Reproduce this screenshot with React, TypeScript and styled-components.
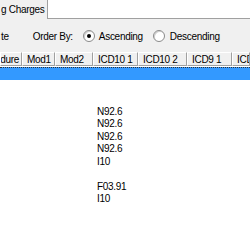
import styled, { createGlobalStyle } from 'styled-components';

const GlobalStyle = createGlobalStyle`
  html, body {
    margin: 0;
    padding: 0;
    background: #ffffff;
    overflow: hidden;
  }
  body {
    font-family: "Liberation Sans", Arial, sans-serif;
    font-size: 10px;
    letter-spacing: -0.3px;
    color: #000000;
  }
`;

const Screen = styled.div`
  width: 250px;
  height: 250px;
  display: flex;
  flex-direction: column;
  overflow: hidden;
`;

const TabStrip = styled.div`
  display: flex;
  height: 18px;
  border-bottom: 1px solid #a0a0a0;
  background: #ffffff;
  flex-shrink: 0;
`;

const Tab = styled.div`
  width: 48px;
  height: 19px;
  display: flex;
  align-items: center;
  padding-left: 1px;
  box-sizing: border-box;
  background: #f0f0f0;
  border-right: 1px solid #a0a0a0;
  white-space: nowrap;
  position: relative;
  z-index: 1;
`;

const Panel = styled.div`
  background: #f0f0f0;
  display: flex;
  flex-direction: column;
  flex-shrink: 0;
`;

const Options = styled.div`
  height: 33px;
  display: flex;
  align-items: center;
  padding-top: 1px;
  box-sizing: border-box;
`;

const Label = styled.span<{ ml: number }>`
  margin-left: ${(p) => p.ml}px;
  white-space: nowrap;
`;

const Radio = styled.span<{ checked?: boolean; ml: number }>`
  margin-left: ${(p) => p.ml}px;
  width: 12px;
  height: 12px;
  border-radius: 50%;
  box-sizing: border-box;
  background: #ffffff;
  border: 1px solid #8a8a8a;
  box-shadow: inset 1px 1px 0 #d0d0d0;
  display: inline-flex;
  align-items: center;
  justify-content: center;
  flex-shrink: 0;
  &::after {
    content: '';
    width: 4px;
    height: 4px;
    border-radius: 50%;
    background: ${(p) => (p.checked ? '#000000' : 'transparent')};
  }
`;

const Grid = styled.div`
  display: flex;
  flex-direction: column;
  background: #ffffff;
  flex: 1;
`;

const HeaderRow = styled.div`
  display: flex;
  height: 14px;
  background: #f0f0f0;
  margin-bottom: 1px;
`;

const HeaderCell = styled.div<{ w: number; right?: boolean }>`
  width: ${(p) => p.w}px;
  flex-shrink: 0;
  box-sizing: border-box;
  display: flex;
  align-items: center;
  justify-content: ${(p) => (p.right ? 'flex-end' : 'flex-start')};
  padding: ${(p) => (p.right ? '0 2px 0 0' : '0 0 0 4px')};
  border-top: 1px solid #ffffff;
  border-left: 1px solid #ffffff;
  border-right: 1px solid #a0a0a0;
  border-bottom: 1px solid #a0a0a0;
  overflow: hidden;
  white-space: nowrap;
`;

const Row = styled.div<{ selected?: boolean }>`
  display: flex;
  height: ${(p) => (p.selected ? '13px' : '12.5px')};
  background: ${(p) => (p.selected ? '#3399ff' : '#ffffff')};
  border-top: ${(p) => (p.selected ? '1px dotted #333333' : 'none')};
  box-sizing: border-box;
`;

const Cell = styled.div<{ w: number }>`
  width: ${(p) => p.w}px;
  flex-shrink: 0;
  box-sizing: border-box;
  padding-left: 4px;
  display: flex;
  align-items: center;
  white-space: nowrap;
  overflow: hidden;
`;

const columns = [
  { title: 'dure', w: 22, right: true },
  { title: 'Mod1', w: 33 },
  { title: 'Mod2', w: 38 },
  { title: 'ICD10 1', w: 45 },
  { title: 'ICD10 2', w: 49 },
  { title: 'ICD9 1', w: 45 },
  { title: 'ICD', w: 18 },
];

const icd = ['', '', '', 'N92.6', 'N92.6', 'N92.6', 'N92.6', 'I10', '', 'F03.91', 'I10', '', '', '', ''];

function App() {
  return (
    <Screen>
      <GlobalStyle />
      <TabStrip>
        <Tab>g Charges</Tab>
      </TabStrip>
      <Panel>
        <Options>
          <Label ml={1}>te</Label>
          <Label ml={24}>Order By:</Label>
          <Radio checked ml={10} />
          <Label ml={4}>Ascending</Label>
          <Radio ml={10} />
          <Label ml={5}>Descending</Label>
        </Options>
      </Panel>
      <Grid>
        <HeaderRow>
          {columns.map((c) => (
            <HeaderCell key={c.title} w={c.w} right={c.right}>
              {c.title}
            </HeaderCell>
          ))}
        </HeaderRow>
        {icd.map((code, i) => (
          <Row key={i} selected={i === 0}>
            {columns.map((c, j) => (
              <Cell key={c.title} w={c.w}>
                {j === 3 ? code : ''}
              </Cell>
            ))}
          </Row>
        ))}
      </Grid>
    </Screen>
  );
}

export default App;
